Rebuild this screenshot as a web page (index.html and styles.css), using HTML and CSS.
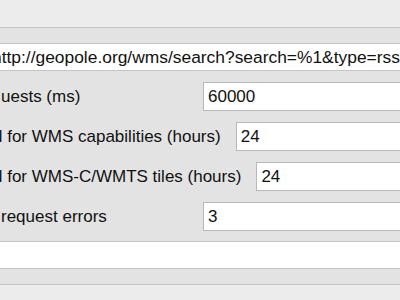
FILE: index.html
```html
<!DOCTYPE html>
<html lang="en">

<head>
    <meta charset="UTF-8">
    <title>Network options</title>
    <link rel="stylesheet" href="styles.css">
</head>

<body>
    <div class="toolbar"></div>
    <div class="group-head"></div>
    <div class="url-field">http://geopole.org/wms/search?search=%1&amp;type=rss</div>

    <!-- timeouts and cache settings -->
    <section class="form">
        <div class="row">
            <span class="label">uests (ms)</span>
            <div class="input">60000</div>
        </div>
        <div class="row wide">
            <span class="label cut">d for WMS capabilities (hours)</span>
            <div class="input">24</div>
        </div>
        <div class="row wide">
            <span class="label cut">d for WMS-C/WMTS tiles (hours)</span>
            <div class="input">24</div>
        </div>
        <div class="row">
            <span class="label">request errors</span>
            <div class="input">3</div>
        </div>
    </section>

    <div class="blank-field"></div>
    <div class="group-foot"></div>
</body>

</html>
```

FILE: styles.css
```css
/* Reset */
* {
    margin: 0;
    padding: 0;
    box-sizing: border-box;
}

body {
    font-family: "Liberation Sans", Arial, sans-serif;
    font-size: 17px;
    color: #111;
    background-color: #ececec;
    overflow: hidden;
    width: 400px;
    height: 300px;
}

.toolbar {
    height: 28px;
    background-color: #ececec;
    border-bottom: 1px solid #c4c4c4;
}

.group-head {
    height: 16px;
    background-color: #e3e3e3;
    border-bottom: 1px solid #c4c4c4;
}

.url-field {
    height: 27px;
    background-color: #fff;
    border-bottom: 1px solid #c4c4c4;
    white-space: nowrap;
    overflow: hidden;
    margin-left: -8px;
    padding-top: 3px;
    font-size: 17.4px;
    line-height: 20px;
}

/* Form rows */
.form {
    background-color: #e3e3e3;
    padding: 11px 0 10px;
    display: flex;
    flex-direction: column;
    gap: 11px;
    border-bottom: 1px solid #c4c4c4;
}

.row {
    display: flex;
    align-items: center;
    gap: 12px;
    height: 29px;
}

.row.wide {
    gap: 15px;
}

.label {
    min-width: 191px;
    white-space: nowrap;
    padding-left: 1px;
}

.label.cut {
    margin-left: -8px;
    min-width: 0;
}

.input {
    flex: 1;
    height: 29px;
    background-color: #fff;
    border: 1px solid #b8b8b8;
    border-right: none;
    padding-left: 4px;
    line-height: 27px;
    white-space: nowrap;
}

.blank-field {
    height: 27px;
    background-color: #fff;
    border-bottom: 1px solid #c4c4c4;
}

.group-foot {
    height: 16px;
    background-color: #e3e3e3;
    border-bottom: 1px solid #c4c4c4;
}
```
